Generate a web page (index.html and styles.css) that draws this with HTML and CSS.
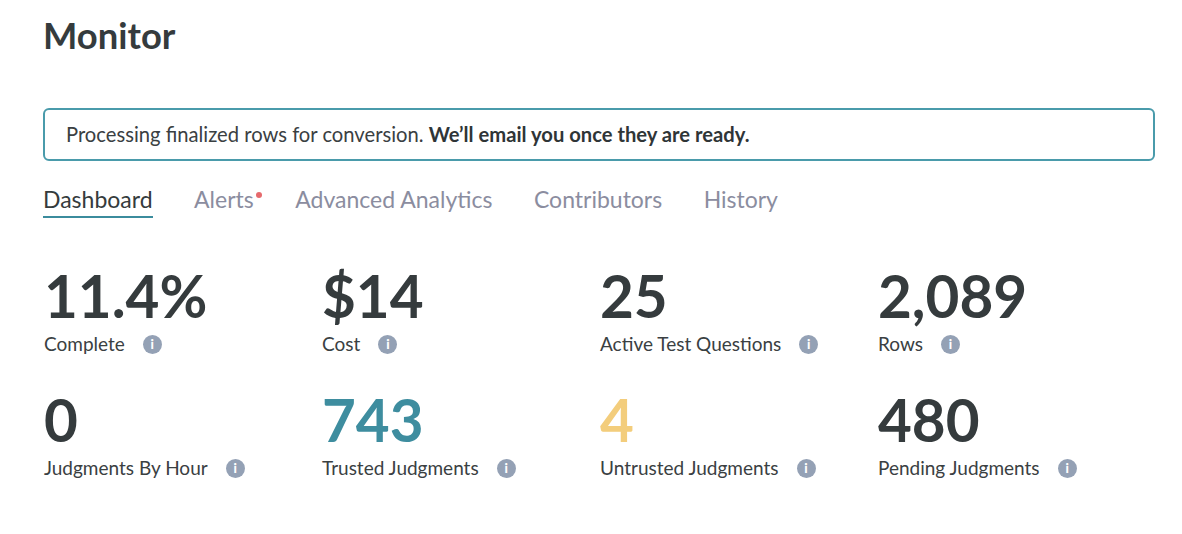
FILE: index.html
```html
<!DOCTYPE html>
<html lang="en">
<head>
<meta charset="utf-8">
<title>Monitor</title>
<link rel="stylesheet" href="styles.css">
</head>
<body>
<main class="page">
  <h1 class="title">Monitor</h1>
  <div class="banner">Processing finalized rows for conversion. <strong>We’ll email you once they are ready.</strong></div>
  <nav class="tabs">
    <a class="tab active">Dashboard</a>
    <a class="tab alert">Alerts<span class="dot"></span></a>
    <a class="tab">Advanced Analytics</a>
    <a class="tab">Contributors</a>
    <a class="tab">History</a>
  </nav>
  <section class="stats">
    <div class="stat"><div class="value">11.4%</div><div class="label">Complete<span class="info">i</span></div></div>
    <div class="stat"><div class="value">$14</div><div class="label">Cost<span class="info">i</span></div></div>
    <div class="stat"><div class="value">25</div><div class="label">Active Test Questions<span class="info">i</span></div></div>
    <div class="stat"><div class="value">2,089</div><div class="label">Rows<span class="info">i</span></div></div>
    <div class="stat"><div class="value">0</div><div class="label">Judgments By Hour<span class="info">i</span></div></div>
    <div class="stat"><div class="value teal">743</div><div class="label">Trusted Judgments<span class="info">i</span></div></div>
    <div class="stat"><div class="value yellow">4</div><div class="label">Untrusted Judgments<span class="info">i</span></div></div>
    <div class="stat"><div class="value">480</div><div class="label">Pending Judgments<span class="info">i</span></div></div>
  </section>
</main>
</body>
</html>
```
FILE: styles.css
```css
* { box-sizing: border-box; }
html, body { margin: 0; background: #fff; }
body { font-family: Lato, "Open Sans", sans-serif; color: #353b3d; }
.page { width: 1182px; height: 534px; overflow: hidden; padding: 13px 28px 0 44px; }
.title { margin: 0 0 0 -1px; font-size: 36.4px; line-height: 44px; font-weight: 700; color: #353b3d; }
.banner { margin: 51px -1px 0 -1px; height: 53px; border: 2px solid #4a9bab; border-radius: 6px; padding: 0 21px 2px; display: flex; align-items: center; white-space: pre; font-size: 20.2px; color: #3a4042; }
.banner strong { font-weight: 700; color: #2f3537; }
.tabs { display: flex; gap: 41.5px; margin-top: 23px; }
.tab { font-size: 23px; line-height: 30px; height: 34px; color: #8b8d9f; position: relative; }
.tab.active { color: #353b3d; border-bottom: 2px solid #3b8c9d; margin-left: -1px; }
.dot { position: absolute; right: -8px; top: 8px; width: 6px; height: 6px; border-radius: 50%; background: #e66a6d; }
.stats { display: grid; grid-template-columns: repeat(4, 278px); row-gap: 30px; margin-top: 46px; }
.value { font-size: 58.4px; line-height: 62px; font-weight: 700; color: #353b3d; }
.value.teal { color: #3e8d9f; }
.value.yellow { color: #f3cd7c; }
.label { display: flex; align-items: center; font-size: 19px; line-height: 28px; margin-top: 4px; color: #3a4042; }
.info { width: 19px; height: 19px; margin-left: 18px; border-radius: 50%; background: #94a1b5; color: #fff; font-size: 13px; line-height: 19px; font-weight: 900; text-align: center; }
```
